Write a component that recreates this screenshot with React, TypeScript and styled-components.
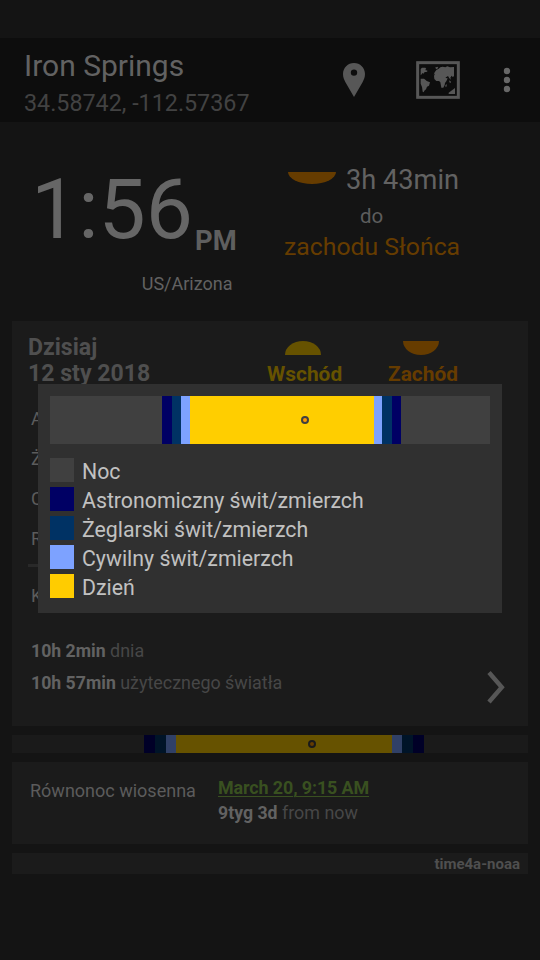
import React from 'react';
import styled, { createGlobalStyle } from 'styled-components';

const GlobalStyle = createGlobalStyle`
  body {
    margin: 0;
    background: #141414;
    font-family: Roboto, "Noto Sans", sans-serif;
  }
  svg { display: block; flex: none; }
`;

const Screen = styled.div`
  position: relative;
  width: 540px;
  height: 960px;
  overflow: hidden;
  background: #141414;
  display: flex;
  flex-direction: column;
  white-space: nowrap;
`;

const StatusBar = styled.div`
  flex: none;
  height: 38px;
`;

const Toolbar = styled.header`
  flex: none;
  height: 84px;
  box-sizing: border-box;
  padding: 10px 29px 0 24px;
  background: #0d0d0d;
  display: flex;
`;

const Place = styled.div`
  width: 319px;
`;

const PlaceName = styled.div`
  font-size: 30px;
  line-height: 36px;
  color: #626262;
`;

const Coordinates = styled.div`
  margin-top: 5px;
  font-size: 23.3px;
  line-height: 28px;
  color: #424242;
`;

const Actions = styled.div`
  flex: 1;
  height: 64px;
  display: flex;
  align-items: center;
  svg:nth-child(2) { margin: 0 43px 0 51px; }
`;

const Now = styled.section`
  flex: none;
  height: 199px;
  display: flex;
`;

const ClockPane = styled.div`
  width: 233.5px;
  padding-top: 39px;
  padding-left: 31px;
  box-sizing: border-box;
  display: flex;
  flex-direction: column;
`;

const Clock = styled.div`
  display: flex;
  font-size: 84px;
  line-height: 98px;
  color: #666;
`;

const Meridiem = styled.span`
  margin: 64px 0 0 2px;
  font-size: 27.4px;
  font-weight: 700;
  line-height: 32px;
  color: #5f5f5f;
`;

const Zone = styled.div`
  align-self: flex-end;
  margin: 14px 1px 0 0;
  font-size: 18px;
  line-height: 22px;
  color: #626262;
`;

const NextEvent = styled.div`
  padding-top: 42px;
  margin-left: 50px;
  width: 178px;
`;

const Remaining = styled.div`
  display: flex;
  gap: 10px;
  padding-left: 4.5px;
  font-size: 27.2px;
  line-height: 32px;
  color: #626262;
  svg { margin-top: 8px; }
`;

const Until = styled.div`
  margin-top: 8px;
  padding-left: 76.5px;
  font-size: 20.5px;
  line-height: 24px;
  color: #5d5d5d;
`;

const EventName = styled.div`
  margin-top: 4px;
  padding-left: 0.5px;
  font-size: 24.8px;
  line-height: 30px;
  color: #663c00;
`;

const Card = styled.section<{ $height: number; $gap?: number }>`
  flex: none;
  height: ${(p) => p.$height}px;
  margin: ${(p) => p.$gap ?? 0}px 12px 0;
  box-sizing: border-box;
  background: #1b1b1b;
`;

const DayHeader = styled.div`
  height: 78px;
  box-sizing: border-box;
  padding: 13px 0 0 16px;
  display: flex;
`;

const DayTitle = styled.div`
  flex: none;
  width: 239px;
  padding-top: 1px;
  font-size: 23.1px;
  font-weight: 700;
  line-height: 26px;
  color: #4f4f4f;
`;

const SunColumn = styled.div<{ $color: string; $width: number }>`
  width: ${(p) => p.$width}px;
  padding-top: 7px;
  font-size: 20.9px;
  font-weight: 700;
  line-height: 26px;
  color: ${(p) => p.$color};
  svg { margin: 0 0 6px 17.5px; }
`;

const SetColumn = styled(SunColumn)`
  svg { margin-left: 15px; }
`;

const Entry = styled.div`
  height: 40px;
  padding-left: 19px;
  font-size: 18px;
  line-height: 40px;
  color: #5c5c5c;
`;

const Divider = styled.div`
  height: 3px;
  margin: 5px 36px 9px 16px;
  background: #292929;
`;

const Summary = styled.div`
  margin-top: 19px;
  padding: 0 22px 0 19px;
  display: flex;
  justify-content: space-between;
  svg { margin-top: 36px; }
`;

const Duration = styled.div<{ $line?: number }>`
  font-size: 17.9px;
  line-height: ${(p) => p.$line ?? 31}px;
  color: #474747;
`;

const Strong = styled.b`
  font-weight: 700;
  font-size: 17.7px;
  color: #626262;
`;

const Track = styled.div<{ $height: number; $night: string }>`
  position: relative;
  height: ${(p) => p.$height}px;
  display: flex;
  background: ${(p) => p.$night};
`;

const Phase = styled.div<{ $width: number; $color: string }>`
  width: ${(p) => p.$width}px;
  background: ${(p) => p.$color};
`;

const NowMarker = styled.div<{ $left: number; $ring: string; $fill: string }>`
  position: absolute;
  left: ${(p) => p.$left}px;
  top: calc(50% - 4px);
  width: 8px;
  height: 8px;
  box-sizing: border-box;
  border: 2px solid ${(p) => p.$ring};
  border-radius: 50%;
  background: ${(p) => p.$fill};
`;

const StripFrame = styled.div`
  flex: none;
  margin: 9px 12px 0;
`;

const Season = styled.div`
  display: flex;
  padding: 13px 0 0 18px;
`;

const SeasonName = styled.div`
  width: 188px;
  padding-top: 3px;
  font-size: 18px;
  line-height: 25px;
  color: #5c5c5c;
`;

const SeasonDate = styled.div`
  font-size: 17.9px;
  font-weight: 700;
  letter-spacing: -0.1px;
  line-height: 25px;
  color: #395020;
  text-decoration: underline;
  text-decoration-thickness: 1px;
  text-underline-offset: 2px;
`;

const Source = styled.div`
  padding-right: 8px;
  text-align: right;
  font-size: 15px;
  font-weight: 700;
  line-height: 23px;
  color: #4f4f4f;
`;

const Dialog = styled.div`
  position: absolute;
  left: 38px;
  top: 384px;
  width: 464px;
  height: 229px;
  box-sizing: border-box;
  padding: 12px;
  background: #303030;
`;

const Legend = styled.div`
  margin-top: 14px;
  display: flex;
  flex-direction: column;
  gap: 5px;
`;

const LegendRow = styled.div`
  display: flex;
  height: 24px;
  gap: 8px;
  font-size: 21.3px;
  line-height: 28px;
  color: #c1c1c1;
`;

const Swatch = styled.span<{ $color: string }>`
  width: 24px;
  height: 24px;
  background: ${(p) => p.$color};
`;

const PinIcon = () => (
  <svg width="22" height="34" viewBox="0 0 22 34">
    <path
      fill="#575757"
      fillRule="evenodd"
      d="M11 0C4.9 0 0 4.9 0 11c0 3 1 5.400 2.300 8L11 34l8.700-15C21 16.400 22 14 22 11 22 4.900 17.100 0 11 0Zm0 6.400a3.200 3.200 0 1 1 0 6.400 3.200 3.200 0 0 1 0-6.400Z"
    />
  </svg>
);

const MapIcon = () => (
  <svg width="44" height="38" viewBox="0 0 132 114">
    <rect x="5" y="5" width="122" height="104" fill="none" stroke="#575757" strokeWidth="9" />
    <path
      fill="#575757"
      d="M14 24l4-4h10l3 4-4 3 8 2-3 3h-5l-5 6-3-2-2 4-3 3ZM26 32l6-4 3 3-4 2ZM14 53h10l5 4 3 3 10 4-3 10-6 3-3 8-5 4-2 5-3-2-2-14-4-10ZM57 20l7-3 3 3-5 5ZM56 34l5-7 7-4 5-4 7-2 8 2 6-3 8 3 12-1v26l-3 5-4-5-4 6 2 6-5-4-4-7-6 4-4 6-5-7-7-4-6-1-5-4-3 2-3-3-4 4ZM54 44l5-7 13 1 4 4h9l4 9 6 1-4 9-4 5-1 6-4 8h-6l-3-16-4-4h-8l-6-6ZM88 73l4-4v7l-3 3ZM100 58l5 4-1 4-4-2ZM98 95l7-5 12-9v18H98Z"
    />
  </svg>
);

const MoreIcon = () => (
  <svg width="8" height="26" viewBox="0 0 8 26" fill="#676767">
    <circle cx="4" cy="4" r="3.200" />
    <circle cx="4" cy="13" r="3.200" />
    <circle cx="4" cy="22" r="3.200" />
  </svg>
);

const SunShape = ({ width, height, color, rising }: { width: number; height: number; color: string; rising?: boolean }) => (
  <svg width={width} height={height}>
    <ellipse cx={width / 2} cy={rising ? height : 0} rx={width / 2} ry={height} fill={color} />
  </svg>
);

const ChevronIcon = () => (
  <svg width="19" height="33" viewBox="0 0 19 33">
    <path d="M2 1.500l12.800 14.700L2 31" fill="none" stroke="#575757" strokeWidth="4.400" />
  </svg>
);

type PhaseData = { width: number; color: string };

const dimPhases: PhaseData[] = [
  { width: 132, color: '#1a1a1a' },
  { width: 11, color: '#000027' },
  { width: 11, color: '#001428' },
  { width: 10, color: '#304066' },
  { width: 216, color: '#665200' },
  { width: 10, color: '#304066' },
  { width: 11, color: '#001428' },
  { width: 11, color: '#000027' },
];

const phases: PhaseData[] = [
  { width: 112, color: '#404040' },
  { width: 10, color: '#000064' },
  { width: 9, color: '#003264' },
  { width: 9, color: '#7da2ff' },
  { width: 184, color: '#ffce00' },
  { width: 8, color: '#7da2ff' },
  { width: 10, color: '#003264' },
  { width: 9, color: '#000064' },
];

const legend: [string, string][] = [
  ['#404040', 'Noc'],
  ['#000064', 'Astronomiczny świt/zmierzch'],
  ['#003264', 'Żeglarski świt/zmierzch'],
  ['#7da2ff', 'Cywilny świt/zmierzch'],
  ['#ffcc00', 'Dzień'],
];

export default function App() {
  return (
    <>
      <GlobalStyle />
      <Screen>
        <StatusBar />
        <Toolbar>
          <Place>
            <PlaceName>Iron Springs</PlaceName>
            <Coordinates>34.58742, -112.57367</Coordinates>
          </Place>
          <Actions>
            <PinIcon />
            <MapIcon />
            <MoreIcon />
          </Actions>
        </Toolbar>

        <Now>
          <ClockPane>
            <Clock>
              1:56<Meridiem>PM</Meridiem>
            </Clock>
            <Zone>US/Arizona</Zone>
          </ClockPane>
          <NextEvent>
            <Remaining>
              <SunShape width={48} height={12} color="#663c00" />
              3h 43min
            </Remaining>
            <Until>do</Until>
            <EventName>zachodu Słońca</EventName>
          </NextEvent>
        </Now>

        <Card $height={405}>
          <DayHeader>
            <DayTitle>
              Dzisiaj
              <br />
              12 sty 2018
            </DayTitle>
            <SunColumn $color="#665200" $width={121}>
              <SunShape width={36} height={14} color="#665200" rising />
              Wschód
            </SunColumn>
            <SetColumn $color="#663c00" $width={90}>
              <SunShape width={36} height={14} color="#663c00" />
              Zachód
            </SetColumn>
          </DayHeader>
          <Entry>A</Entry>
          <Entry>Ż</Entry>
          <Entry>C</Entry>
          <Entry>R</Entry>
          <Divider />
          <Entry>K</Entry>
          <Summary>
            <div>
              <Duration>
                <Strong>10h 2min</Strong> dnia
              </Duration>
              <Duration>
                <Strong>10h 57min</Strong> użytecznego światła
              </Duration>
            </div>
            <ChevronIcon />
          </Summary>
        </Card>

        <StripFrame>
          <Track $height={18} $night="#1a1a1a">
            {dimPhases.map((p, i) => (
              <Phase key={i} $width={p.width} $color={p.color} />
            ))}
            <NowMarker $left={296} $ring="#1a1a1a" $fill="#663c00" />
          </Track>
        </StripFrame>

        <Card $height={82} $gap={9}>
          <Season>
            <SeasonName>Równonoc wiosenna</SeasonName>
            <div>
              <SeasonDate>March 20, 9:15 AM</SeasonDate>
              <Duration $line={25}>
                <Strong>9tyg 3d</Strong> from now
              </Duration>
            </div>
          </Season>
        </Card>

        <Card $height={21} $gap={9}>
          <Source>time4a-noaa</Source>
        </Card>

        <Dialog>
          <Track $height={48} $night="#404040">
            {phases.map((p, i) => (
              <Phase key={i} $width={p.width} $color={p.color} />
            ))}
            <NowMarker $left={251} $ring="#404040" $fill="#ff9900" />
          </Track>
          <Legend>
            {legend.map(([color, label]) => (
              <LegendRow key={label}>
                <Swatch $color={color} />
                {label}
              </LegendRow>
            ))}
          </Legend>
        </Dialog>
      </Screen>
    </>
  );
}
